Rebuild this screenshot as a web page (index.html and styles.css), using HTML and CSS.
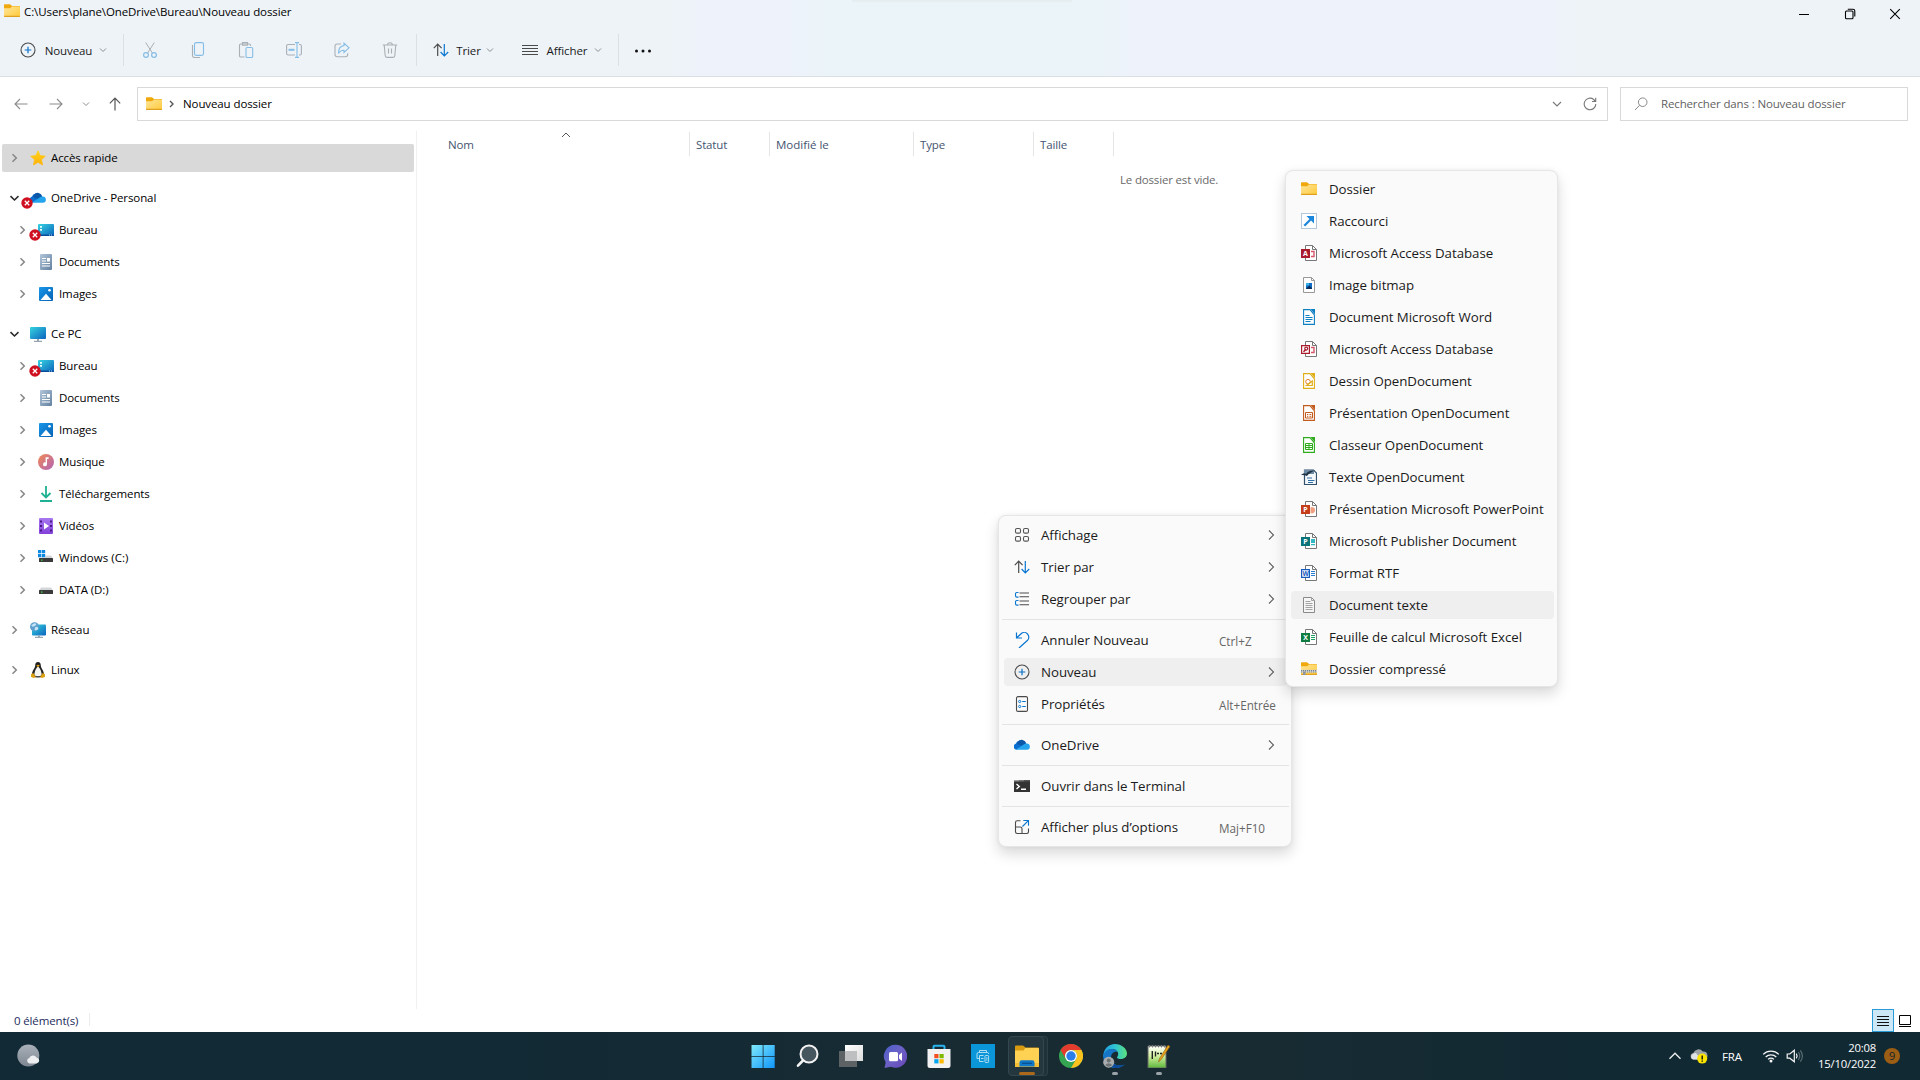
FILE: index.html
```html
<!DOCTYPE html>
<html lang="fr">
<head>
<meta charset="utf-8">
<title>Nouveau dossier</title>
<link rel="stylesheet" href="styles.css">
</head>
<body>
<svg class="defs" aria-hidden="true">
  <defs>
    <linearGradient id="gFolder" x1="0" y1="0" x2="1" y2="1"><stop offset="0" stop-color="#ffe59a"/><stop offset="1" stop-color="#ffca3a"/></linearGradient>
    <linearGradient id="gDesk" x1="0" y1="0" x2="1" y2="1"><stop offset="0" stop-color="#35d3e0"/><stop offset="1" stop-color="#0c64bd"/></linearGradient>
    <linearGradient id="gDoc" x1="0" y1="0" x2="1" y2="1"><stop offset="0" stop-color="#b3c6da"/><stop offset="1" stop-color="#62809f"/></linearGradient>
    <linearGradient id="gImg" x1="0" y1="0" x2="1" y2="1"><stop offset="0" stop-color="#1a98ea"/><stop offset="1" stop-color="#0561b4"/></linearGradient>
    <linearGradient id="gMus" x1="0" y1="0" x2="1" y2="1"><stop offset="0" stop-color="#f08a54"/><stop offset="1" stop-color="#b163b8"/></linearGradient>
    <linearGradient id="gVid" x1="0" y1="0" x2="0" y2="1"><stop offset="0" stop-color="#a878f0"/><stop offset="1" stop-color="#8240d8"/></linearGradient>
    <linearGradient id="gStar" x1="0" y1="0" x2="0" y2="1"><stop offset="0" stop-color="#ffd21c"/><stop offset="1" stop-color="#fdb20a"/></linearGradient>
    <linearGradient id="gWin" x1="0" y1="0" x2="1" y2="1"><stop offset="0" stop-color="#7feafc"/><stop offset="1" stop-color="#0f94fa"/></linearGradient>
    <linearGradient id="gChat" x1="0" y1="0" x2="1" y2="1"><stop offset="0" stop-color="#4a5fc8"/><stop offset=".45" stop-color="#6a62c6"/><stop offset="1" stop-color="#6a46b8"/></linearGradient>
    <linearGradient id="gEdge" x1="0" y1="0" x2="1" y2="0"><stop offset="0" stop-color="#1f9de0"/><stop offset=".5" stop-color="#2fc4d4"/><stop offset="1" stop-color="#5ce07c"/></linearGradient>
    <linearGradient id="gNote" x1="0" y1="0" x2="0" y2="1"><stop offset="0" stop-color="#fff"/><stop offset=".45" stop-color="#d4f0a0"/><stop offset="1" stop-color="#5cb83a"/></linearGradient>
    <linearGradient id="gMoon" x1="0" y1="0" x2="0" y2="1"><stop offset="0" stop-color="#a9b0ba"/><stop offset="1" stop-color="#7e8791"/></linearGradient>
    <linearGradient id="gTv1" x1="0" y1="0" x2="1" y2="1"><stop offset="0" stop-color="#fff"/><stop offset="1" stop-color="#dcdcdc"/></linearGradient>
  </defs>
  <symbol id="folder" viewBox="0 0 16 16"><path d="M0 2.2c0-.7.5-1 1-1h4.6c.5 0 .8.2 1.1.5L8 3H15c.6 0 1 .3 1 1v3H0z" fill="#f0a90c"/><path d="M0 5.2h6.2L8 3.600h7.300q.7 0 .7.700V13.300q0 .8-.8.8H.8q-.8 0-.8-.8z" fill="url(#gFolder)"/><path d="M0 12.800h16v.5q0 .8-.8.8H.8q-.8 0-.8-.8z" fill="#e0a01e"/></symbol>
  <symbol id="chev-d" viewBox="0 0 8 8"><path d="M1 2.500l3 3 3-3" fill="none" stroke="currentColor" stroke-width="1"/></symbol>
  <symbol id="chev-r" viewBox="0 0 10 10"><path d="M3 .5l4.500 4.500L3 9.500" fill="none" stroke="currentColor" stroke-width="1.100"/></symbol>
  <symbol id="tw-r" viewBox="0 0 10 10"><path d="M3.500 1.200L7.300 5 3.500 8.800" fill="none" stroke="#868686" stroke-width="1.500"/></symbol>
  <symbol id="tw-d" viewBox="0 0 10 10"><path d="M1.500 3.200L5.500 7l4-3.800" fill="none" stroke="#2b2b2b" stroke-width="1.600"/></symbol>
  <symbol id="plus" viewBox="0 0 16 16"><circle cx="8" cy="8" r="7" fill="none" stroke="#4a4a4a" stroke-width="1.100"/><path d="M8 4.700v6.600M4.700 8h6.600" stroke="#0a70c8" stroke-width="1.200"/></symbol>
  <symbol id="sort" viewBox="0 0 16 16"><g fill="none" stroke-width="1.200"><path d="M4.700 14V2.200M.8 6.200l3.900-4 3.900 4" stroke="#4c4c4c"/><path d="M11.300 2v11.900M7.600 10l3.700 3.900L15.200 10" stroke="#0a76d0"/></g></symbol>
  <symbol id="star" viewBox="0 0 16 16"><path d="M8 .8l2.100 4.800 5.200.6-3.900 3.500 1.100 5.200L8 12.300l-4.500 2.600 1.100-5.200L.7 6.200l5.200-.6z" fill="url(#gStar)" stroke="url(#gStar)" stroke-width=".8" stroke-linejoin="round"/></symbol>
  <symbol id="cloud" viewBox="0 0 16 16"><path d="M2.400 12.700A3.200 3.200 0 0 1 2 6.500a4.600 4.600 0 0 1 3.600-3.100l6 4.600z" fill="#0a6fd0"/><path d="M4 4.700a4.700 4.700 0 0 1 8.300 1.700L9 9.500 3 7z" fill="#0b57a8"/><path d="M2 12.500L9.700 7.600a4 4 0 0 1 2.800-1.100 3.100 3.100 0 0 1 .4 6.300H3.300z" fill="#25a4ee"/></symbol>
  <symbol id="err" viewBox="0 0 12 12"><circle cx="6" cy="6" r="5.700" fill="#cf1020"/><path d="M3.800 3.800l4.400 4.400M8.200 3.800L3.800 8.200" stroke="#fff" stroke-width="1.300"/></symbol>
  <symbol id="desk" viewBox="0 0 16 16"><rect y="2" width="16" height="12" rx="1" fill="url(#gDesk)"/><path d="M2 4h2v1.800H2zM2 7h2v1.800H2z" fill="#e8fbff"/><path d="M0 12.500h16V13q0 1-1 1H1q-1 0-1-1z" fill="#0a4d9b"/><path d="M11 13h1M13 13h1" stroke="#9ce0ff"/></symbol>
  <symbol id="docs" viewBox="0 0 16 16"><rect x="2" width="12" height="16" rx="1" fill="url(#gDoc)"/><path d="M4 4.500h4M4 7h4M4 9.500h8M4 12h8" stroke="#fff" stroke-width="1.100"/><path d="M9 4h3v3.500H9z" fill="#fff"/></symbol>
  <symbol id="imgs" viewBox="0 0 16 16"><rect x="1" y="1" width="14" height="14" rx="1" fill="url(#gImg)"/><path d="M2.500 14L8 7.800 13.500 14z" fill="#fff"/><circle cx="11.500" cy="4.200" r="1.300" fill="#fff"/></symbol>
  <symbol id="pc" viewBox="0 0 16 16"><rect y="1" width="16" height="12" rx="1" fill="url(#gDesk)"/><path d="M7 13h2v1.700h3V16H4v-1.300h3z" fill="#9aa6b0"/></symbol>
  <symbol id="music" viewBox="0 0 16 16"><circle cx="8" cy="8" r="8" fill="url(#gMus)"/><path d="M7.600 3.200h3v1.900H9v5.200a2 2 0 1 1-1.400-1.900z" fill="#fff"/></symbol>
  <symbol id="dl" viewBox="0 0 16 16"><path d="M8 0v11M3.500 7L8 11.500 12.500 7M2 15h12" fill="none" stroke="#1eb193" stroke-width="1.800"/></symbol>
  <symbol id="video" viewBox="0 0 16 16"><rect x="1" width="14" height="16" rx="1" fill="url(#gVid)"/><path d="M6 4.500l5 3.500-5 3.500z" fill="#fff"/><path d="M2 2.500h2v2H2zM2 7h2v2H2zM2 11.500h2v2H2zM12 2.500h2v2h-2zM12 7h2v2h-2zM12 11.500h2v2h-2z" fill="#4a1a8c"/></symbol>
  <symbol id="drive" viewBox="0 0 16 16"><path d="M3 5.500h10l2 3H1z" fill="#d4d7d9"/><rect x="1" y="8" width="14" height="4" rx=".6" fill="#3a3a3a"/><rect x="3" y="9.500" width="1.500" height="1.200" fill="#3be03b"/></symbol>
  <symbol id="cdrive" viewBox="0 0 16 16"><path d="M5 5.500h8l2 3H2z" fill="#d4d7d9"/><rect x="1" y="8" width="14" height="4" rx=".6" fill="#3a3a3a"/><rect x="3" y="9.500" width="1.500" height="1.200" fill="#3be03b"/><path d="M0 0h7.500v7.500H0z" fill="#fff"/><path d="M0 0h3.300v3.300H0zM3.900 0h3.300v3.300H3.900zM0 3.900h3.300v3.300H0zM3.900 3.900h3.300v3.300H3.900z" fill="#1089e0"/></symbol>
  <symbol id="net" viewBox="0 0 16 16"><rect x="2" y="2.500" width="14" height="11" rx="1" fill="url(#gDesk)"/><path d="M8 13.500h2v1.200h3v1.200H5v-1.200h3z" fill="#9aa6b0"/><circle cx="4.500" cy="4.700" r="4.500" fill="#5c9fce"/><path d="M1.200 3.500q3-3 4.500-2t-1 2.500-3.500-.5zM5 5.500q2-1.500 3 .2t-1.500 2.500T5 5.500z" fill="#c5e3f5"/></symbol>
  <symbol id="tux" viewBox="0 0 16 16"><path d="M8 0c2 0 2.800 1.400 2.800 3.500 0 2.500 3.200 5 3.200 9 0 2-2 3-6 3s-6-1-6-3c0-4 3.200-6.500 3.200-9C5.200 1.400 6 0 8 0z" fill="#222"/><path d="M8 4.500c1.500 1 3.800 5 3.600 8.500-1 1.800-6.200 1.800-7.200 0C4.200 9.500 6.500 5.500 8 4.500z" fill="#f4f4f0"/><path d="M6.200 3.500L8 2.700l1.800.8L8 5z" fill="#e8a50c"/><path d="M1 12.200l2.300-1.200 2.600 4-1.900 1-2.900-1zM15 12.200L12.700 11l-2.600 4 1.900 1 2.900-1z" fill="#dba010"/></symbol>
  <symbol id="more-arrow" viewBox="0 0 16 16"><g fill="none" stroke-width="1.100"><path d="M6.500 1.700H3.200Q1.500 1.700 1.500 3.400v9.400q0 1.700 1.700 1.700h9.600q1.700 0 1.700-1.700V9.500M1.500 8h4.800q1.700 0 1.700 1.700v4.800" stroke="#4a4a4a"/><path d="M8.500 7.500L14.300 1.700M9.300 1.500h5.200v5.200" stroke="#0a76d0"/></g></symbol>
  <symbol id="page" viewBox="0 0 16 16"><path d="M4.500.5h7l4 4v11h-11z" fill="#fff" stroke="#777"/><path d="M11.500.5v4h4" fill="none" stroke="#777"/></symbol>
  <symbol id="odf" viewBox="0 0 16 16"><path d="M2.600.6h6.400L13.400 6v9.400H2.600z" fill="#fff" stroke="currentColor" stroke-width="1.100"/><path d="M9.500 0H14v5.500z" fill="currentColor"/></symbol>
</svg>

<div class="window">
  <header class="head">
    <div class="title">
      <svg class="i16"><use href="#folder"/></svg>
      <span class="title-text">C:\Users\plane\OneDrive\Bureau\Nouveau dossier</span>
      <div class="winbtns">
        <svg viewBox="0 0 12 12"><path d="M1 6.500h10" stroke="#000" stroke-width="1"/></svg>
        <svg viewBox="0 0 12 12"><g fill="none" stroke="#000" stroke-width="1.100"><rect x="1.500" y="3" width="7.500" height="7.800" rx="1"/><path d="M3.800 1.300h5.200q1.800 0 1.800 1.800v5.400"/></g></svg>
        <svg viewBox="0 0 12 12"><path d="M1.200 1.200l9.600 9.600M10.800 1.200l-9.600 9.600" stroke="#000" stroke-width="1.100"/></svg>
      </div>
    </div>
    <div class="toolbar">
      <button class="tb tb-new"><svg class="i16"><use href="#plus"/></svg><span>Nouveau</span><svg class="i8"><use href="#chev-d"/></svg></button>
      <i class="vsep"></i>
      <div class="tools">
        <svg class="i16" viewBox="0 0 16 16"><g fill="none"><path d="M3.700.5l6.800 10.700M12.300.5L5.500 11.200" stroke="#a9b0b5"/><circle cx="4" cy="13" r="2.400" stroke="#86bde6" stroke-width="1.200"/><circle cx="12" cy="13" r="2.400" stroke="#86bde6" stroke-width="1.200"/></g></svg>
        <svg class="i16" viewBox="0 0 16 16"><g fill="none" stroke-width="1.100"><path d="M2.500 3v10.500q0 2 2 2h5.500" stroke="#a9b0b5"/><rect x="4.500" y=".6" width="9" height="12.800" rx="1.600" stroke="#86bde6"/></g></svg>
        <svg class="i16" viewBox="0 0 16 16"><g fill="none" stroke-width="1.100"><path d="M6.500 15H2.800q-1.300 0-1.300-1.300V3.300q0-1.300 1.300-1.300h8.400q1.300 0 1.300 1.300v.7" stroke="#a9b0b5"/><path d="M4.500.6h5v2.600h-5z" stroke="#a9b0b5"/><rect x="8" y="5.500" width="6.700" height="10" rx="1.200" stroke="#86bde6"/></g></svg>
        <svg class="i16" viewBox="0 0 16 16"><g fill="none" stroke-width="1.100"><path d="M9 2.500H2.200Q.6 2.500.6 4.100v7.300q0 1.600 1.600 1.600H9M13 2.500h.8q1.600 0 1.600 1.600v7.300q0 1.600-1.600 1.600H13" stroke="#a9b0b5"/><path d="M11 .6v14.800M9 .6h4M9 15.400h4" stroke="#86bde6"/><path d="M2.500 7.800h6" stroke="#86bde6" stroke-width="2"/></g></svg>
        <svg class="i16" viewBox="0 0 16 16"><g fill="none" stroke-width="1.100"><path d="M7 2H3.200Q1 2 1 4.200v8.300q0 2.200 2.200 2.200h8.300q2.200 0 2.200-2.200v-1.200" stroke="#a9b0b5"/><path d="M10 1.200l5 4.600-5 4.600V8.200Q6 8.200 4.500 11.500 4.500 4 10 3.600z" stroke="#86bde6"/></g></svg>
        <svg class="i16" viewBox="0 0 16 16"><g fill="none" stroke="#a9b0b5" stroke-width="1.100"><path d="M.8 3h14.400M2.200 3l1 10.800q.2 1.600 1.600 1.600h6.400q1.400 0 1.600-1.600L13.800 3M5.600 3Q5.600.7 8 .7T10.400 3M6.500 6.500v5M9.500 6.500v5"/></g></svg>
      </div>
      <i class="vsep"></i>
      <button class="tb tb-sort"><svg class="i16"><use href="#sort"/></svg><span>Trier</span><svg class="i8"><use href="#chev-d"/></svg></button>
      <button class="tb tb-view"><svg class="i16" viewBox="0 0 16 16"><path d="M0 3.500h16M0 6.500h16M0 9.500h16M0 12.500h16" stroke="#4a4a4a"/></svg><span>Afficher</span><svg class="i8"><use href="#chev-d"/></svg></button>
      <i class="vsep"></i>
      <svg class="dots" viewBox="0 0 18 4"><g fill="#111"><circle cx="2.500" cy="2" r="1.500"/><circle cx="9" cy="2" r="1.500"/><circle cx="15.500" cy="2" r="1.500"/></g></svg>
    </div>
  </header>

  <nav class="navbar">
    <div class="arrows">
      <svg class="i14" viewBox="0 0 14 14"><path d="M13.500 7H1M6 2L1 7l5 5" fill="none" stroke="#8c8c8c" stroke-width="1.100"/></svg>
      <svg class="i14" viewBox="0 0 14 14"><path d="M.5 7H13M8 2l5 5-5 5" fill="none" stroke="#8c8c8c" stroke-width="1.100"/></svg>
      <svg class="i8"><use href="#chev-d"/></svg>
      <svg class="i14 up" viewBox="0 0 14 14"><path d="M7 13.500V1.200M1.800 6.400L7 1.200l5.200 5.200" fill="none" stroke="#555" stroke-width="1.200"/></svg>
    </div>
    <div class="address">
      <svg class="i16"><use href="#folder"/></svg>
      <svg class="crumb" viewBox="0 0 10 10"><path d="M3 2l3 3-3 3" fill="none" stroke="#555" stroke-width="1.400"/></svg>
      <span>Nouveau dossier</span>
      <svg class="drop" viewBox="0 0 10 10"><path d="M1 3l4 4 4-4" fill="none" stroke="#777" stroke-width="1.100"/></svg>
      <svg class="refresh" viewBox="0 0 14 14"><path d="M12.800 7A5.800 5.800 0 1 1 10.700 2.500L12.500 4.300M12.700 .8v3.700H9" fill="none" stroke="#777" stroke-width="1.100"/></svg>
    </div>
    <div class="search">
      <svg viewBox="0 0 14 14"><g fill="none" stroke="#8a8a8a" stroke-width="1"><circle cx="8.700" cy="5.200" r="4.300"/><path d="M5.600 8.300L1 13"/></g></svg>
      <span>Rechercher dans : Nouveau dossier</span>
    </div>
  </nav>

  <main class="body">
    <aside class="tree">
      <div class="row sel"><svg class="tw"><use href="#tw-r"/></svg><svg class="i16"><use href="#star"/></svg><span>Accès rapide</span></div>
      <div class="row gap"><svg class="tw"><use href="#tw-d"/></svg><svg class="i16"><use href="#cloud"/></svg><svg class="err"><use href="#err"/></svg><span>OneDrive - Personal</span></div>
      <div class="row sub"><svg class="tw"><use href="#tw-r"/></svg><svg class="i16"><use href="#desk"/></svg><svg class="err"><use href="#err"/></svg><span>Bureau</span></div>
      <div class="row sub"><svg class="tw"><use href="#tw-r"/></svg><svg class="i16"><use href="#docs"/></svg><span>Documents</span></div>
      <div class="row sub"><svg class="tw"><use href="#tw-r"/></svg><svg class="i16"><use href="#imgs"/></svg><span>Images</span></div>
      <div class="row gap"><svg class="tw"><use href="#tw-d"/></svg><svg class="i16"><use href="#pc"/></svg><span>Ce PC</span></div>
      <div class="row sub"><svg class="tw"><use href="#tw-r"/></svg><svg class="i16"><use href="#desk"/></svg><svg class="err"><use href="#err"/></svg><span>Bureau</span></div>
      <div class="row sub"><svg class="tw"><use href="#tw-r"/></svg><svg class="i16"><use href="#docs"/></svg><span>Documents</span></div>
      <div class="row sub"><svg class="tw"><use href="#tw-r"/></svg><svg class="i16"><use href="#imgs"/></svg><span>Images</span></div>
      <div class="row sub"><svg class="tw"><use href="#tw-r"/></svg><svg class="i16"><use href="#music"/></svg><span>Musique</span></div>
      <div class="row sub"><svg class="tw"><use href="#tw-r"/></svg><svg class="i16"><use href="#dl"/></svg><span>Téléchargements</span></div>
      <div class="row sub"><svg class="tw"><use href="#tw-r"/></svg><svg class="i16"><use href="#video"/></svg><span>Vidéos</span></div>
      <div class="row sub"><svg class="tw"><use href="#tw-r"/></svg><svg class="i16"><use href="#cdrive"/></svg><span class="wide">Windows (C:)</span></div>
      <div class="row sub"><svg class="tw"><use href="#tw-r"/></svg><svg class="i16"><use href="#drive"/></svg><span>DATA (D:)</span></div>
      <div class="row gap"><svg class="tw"><use href="#tw-r"/></svg><svg class="i16"><use href="#net"/></svg><span>Réseau</span></div>
      <div class="row gap"><svg class="tw"><use href="#tw-r"/></svg><svg class="i16"><use href="#tux"/></svg><span>Linux</span></div>
    </aside>
    <section class="files">
      <div class="cols">
        <div class="col c-name">Nom<svg class="asc" viewBox="0 0 10 6"><path d="M1 5l4-4 4 4" fill="none" stroke="#555"/></svg></div>
        <div class="col c-status">Statut</div>
        <div class="col c-date">Modifié le</div>
        <div class="col c-type">Type</div>
        <div class="col c-size">Taille</div>
      </div>
      <p class="empty">Le dossier est vide.</p>
    </section>
  </main>

  <footer class="status">
    <span>0 élément(s)</span>
    <div class="views">
      <div class="view on"><svg viewBox="0 0 12 12"><path d="M0 1.500h12M0 4.500h12M0 7.500h12M0 10.500h12" stroke="#111"/></svg></div>
      <div class="view"><svg viewBox="0 0 12 12"><path d="M.5.500h11v9H.5zM0 11.500h12" fill="none" stroke="#000"/></svg></div>
    </div>
  </footer>
</div>

<div class="menu ctx">
  <div class="mi"><svg class="i16" viewBox="0 0 16 16"><g fill="none" stroke="#555" stroke-width="1.100"><rect x="1.500" y="1.500" width="5" height="4.600" rx="1.400"/><rect x="9.500" y="1.500" width="5" height="4.600" rx="1.400"/><rect x="1.500" y="9.500" width="5" height="4.600" rx="1.400"/><rect x="9.500" y="9.500" width="5" height="4.600" rx="1.400"/></g></svg><span>Affichage</span><svg class="arr"><use href="#chev-r"/></svg></div>
  <div class="mi"><svg class="i16"><use href="#sort"/></svg><span>Trier par</span><svg class="arr"><use href="#chev-r"/></svg></div>
  <div class="mi"><svg class="i16" viewBox="0 0 16 16"><g fill="none" stroke-width="1.100"><path d="M4.500 1.500H2.800Q1.500 1.500 1.500 2.800v2q0 1.300 1.300 1.300h1.700M4.500 9.500H2.800q-1.300 0-1.300 1.300v2q0 1.300 1.300 1.300h1.700" stroke="#0a76d0"/><path d="M5.500 2h9.500M5.500 5.700h9.500M5.500 10h9.500M5.500 13.700h9.500" stroke="#4a4a4a"/></g></svg><span>Regrouper par</span><svg class="arr"><use href="#chev-r"/></svg></div>
  <hr>
  <div class="mi"><svg class="i16" viewBox="0 0 16 16"><path d="M2.500.5v5.500H8M2.500 6L6.800 2A4.600 4.600 0 0 1 13.600 8.200L5 16" fill="none" stroke="#0a76d0" stroke-width="1.200"/></svg><span>Annuler Nouveau</span><kbd>Ctrl+Z</kbd></div>
  <div class="mi hov"><svg class="i16"><use href="#plus"/></svg><span>Nouveau</span><svg class="arr"><use href="#chev-r"/></svg></div>
  <div class="mi"><svg class="i16" viewBox="0 0 16 16"><g fill="none"><rect x="2.500" y=".6" width="11" height="14.800" rx="1.500" stroke="#4a4a4a" stroke-width="1.100"/><circle cx="5.700" cy="5.500" r="1.100" stroke="#0a76d0"/><circle cx="5.700" cy="10.500" r="1.100" stroke="#0a76d0"/><path d="M8.200 5.500h3.600M8.200 10.500h3.600" stroke="#0a76d0" stroke-width="1.200"/></g></svg><span>Propriétés</span><kbd>Alt+Entrée</kbd></div>
  <hr>
  <div class="mi"><svg class="i16"><use href="#cloud"/></svg><span>OneDrive</span><svg class="arr"><use href="#chev-r"/></svg></div>
  <hr>
  <div class="mi"><svg class="i16" viewBox="0 0 16 16"><path d="M0 2h16v12H0z" fill="#333"/><path d="M0 2h5.500v1.500H0z" fill="#999"/><path d="M5.500 2h5v1.500h-5z" fill="#777"/><path d="M10.500 2H16v1.500h-5.500z" fill="#555"/><path d="M2.500 6l2.800 2.500L2.500 11M7 11.300h5" fill="none" stroke="#fff" stroke-width="1.400"/></svg><span>Ouvrir dans le Terminal</span></div>
  <hr>
  <div class="mi"><svg class="i16"><use href="#more-arrow"/></svg><span>Afficher plus d’options</span><kbd>Maj+F10</kbd></div>
</div>

<div class="menu sub-menu">
  <div class="mi"><svg class="i16"><use href="#folder"/></svg><span>Dossier</span></div>
  <div class="mi"><svg class="i16" viewBox="0 0 16 16"><rect x=".5" y=".5" width="15" height="15" fill="#fff" stroke="#b4c8dc"/><path d="M3.300 12.700L11 5" stroke="#1a86dc" stroke-width="2.200"/><path d="M5.500 3H13v7.500L10.800 8.300 7.700 5.200z" fill="#1a86dc"/></svg><span>Raccourci</span></div>
  <div class="mi"><svg class="i16" viewBox="0 0 16 16"><use href="#page"/><path d="M10 6.500h3v5h-3" fill="none" stroke="#d8566c" stroke-width="1.400"/><path d="M0 4h9v9H0z" fill="#a91c2e"/><text x="4.500" y="11.300" class="ltr">A</text></svg><span>Microsoft Access Database</span></div>
  <div class="mi"><svg class="i16" viewBox="0 0 16 16"><path d="M2.500.500h8l3 3v12h-11z" fill="#fff" stroke="#999"/><path d="M10.500.500v3h3" fill="none" stroke="#999"/><path d="M5 6h6v6H5z" fill="#0e6ec4"/><path d="M5 12l3-3.500 3 2.500v1z" fill="#0a2d5c"/><path d="M5 6h3v2.500H5z" fill="#38b0e8"/></svg><span>Image bitmap</span></div>
  <div class="mi c-blue"><svg class="i16" viewBox="0 0 16 16"><use href="#odf"/><path d="M4.500 6.500h4M4.500 8.500h7M4.500 10.500h7M4.500 12.500h5" stroke="currentColor"/></svg><span>Document Microsoft Word</span></div>
  <div class="mi"><svg class="i16" viewBox="0 0 16 16"><use href="#page"/><path d="M10 6.500h3v5h-3" fill="none" stroke="#d8566c" stroke-width="1.400"/><path d="M.6 4.600h7.800v7.800H.6z" fill="#fff" stroke="#a91c2e" stroke-width="1.200"/><path d="M2.500 10.800L5 8.300" stroke="#a91c2e" stroke-width="1.600"/><circle cx="5.200" cy="7.600" r="1.500" fill="none" stroke="#a91c2e" stroke-width="1.100"/></svg><span>Microsoft Access Database</span></div>
  <div class="mi c-gold"><svg class="i16" viewBox="0 0 16 16"><use href="#odf"/><circle cx="7" cy="8.700" r="2.300" fill="none" stroke="#e08030"/><path d="M5.500 12.500L11.300 8v4.500z" fill="none" stroke="currentColor" stroke-width="1.200"/></svg><span>Dessin OpenDocument</span></div>
  <div class="mi c-orange"><svg class="i16" viewBox="0 0 16 16"><use href="#odf"/><path d="M4.500 7.500h7v5.500h-7zM6 9.500h1.300M8.500 9.500h1.800M6 11.300h1.300M8.500 11.300h1.800" fill="none" stroke="currentColor"/></svg><span>Présentation OpenDocument</span></div>
  <div class="mi c-green"><svg class="i16" viewBox="0 0 16 16"><use href="#odf"/><path d="M4.500 6.500h7v6h-7zM4.500 8.500h7M4.500 10.500h7M8 6.500v6" fill="none" stroke="currentColor" stroke-width="1"/></svg><span>Classeur OpenDocument</span></div>
  <div class="mi"><svg class="i16" viewBox="0 0 16 16"><path d="M3.500 1h9l3 3v11.500h-12z" fill="#f4f8fb" stroke="#34516c" stroke-width="1.200"/><path d="M3 1h10v4H3z" fill="#6d8ba5"/><path d="M0 6q3-3 5-1 2-4 9-3.500Q8 4 6 7 3 5.500 0 6z" fill="#1f3447"/><path d="M6 9h5M7 11.500h6.500M7 13.500h5" stroke="#2f6fa8" stroke-width="1.100"/></svg><span>Texte OpenDocument</span></div>
  <div class="mi"><svg class="i16" viewBox="0 0 16 16"><use href="#page"/><path d="M9.500 6.500a3 3 0 0 1 4.500 3 3 3 0 0 1-4.500 2.600z" fill="#f0a080"/><path d="M0 4h9v9H0z" fill="#c43e1c"/><text x="4.500" y="11.300" class="ltr">P</text></svg><span>Présentation Microsoft PowerPoint</span></div>
  <div class="mi"><svg class="i16" viewBox="0 0 16 16"><use href="#page"/><path d="M10 6h4v4h-4zM10 11h4v1.200h-4z" fill="#36b8c4"/><path d="M0 4h9v9H0z" fill="#0a7478"/><text x="4.500" y="11.300" class="ltr">P</text></svg><span>Microsoft Publisher Document</span></div>
  <div class="mi"><svg class="i16" viewBox="0 0 16 16"><use href="#page"/><path d="M10 6.500h4M10 8.500h4M10 10.500h4" stroke="#2b7cd3"/><path d="M.6 4.600h7.800v7.800H.6z" fill="#fff" stroke="#185abd" stroke-width="1.200"/><text x="4.500" y="11.200" class="ltr w">W</text></svg><span>Format RTF</span></div>
  <div class="mi hov"><svg class="i16" viewBox="0 0 16 16"><path d="M2.500.500h8l3 3v12h-11z" fill="#f6f6f6" stroke="#8a8a8a"/><path d="M10.500.500v3h3M4.500 4.500h5M4.500 6.500h7M4.500 8.500h7M4.500 10.500h7M4.500 12.500h7" fill="none" stroke="#a4a4a4"/></svg><span>Document texte</span></div>
  <div class="mi"><svg class="i16" viewBox="0 0 16 16"><use href="#page"/><path d="M10 6.500h4M10 8.500h4M10 10.500h4" stroke="#21a366" stroke-width="1.200"/><path d="M0 4h9v9H0z" fill="#107c41"/><text x="4.500" y="11.300" class="ltr">X</text></svg><span>Feuille de calcul Microsoft Excel</span></div>
  <div class="mi"><svg class="i16" viewBox="0 0 16 16"><use href="#folder"/><path d="M0 8.800h16v2.700H0z" fill="#c9cdd0"/><path d="M0 9.500h16M0 11h16" stroke="#7d858c" stroke-dasharray="1 1"/><path d="M2 10.500h2.500V14H2z" fill="#8f979e"/></svg><span>Dossier compressé</span></div>
</div>

<div class="taskbar">
  <div class="weather"><svg viewBox="0 0 24 24"><circle cx="11.300" cy="11.500" r="11" fill="url(#gMoon)"/><path d="M12.500 19.500a2.800 2.800 0 0 1-.2-5.500 4 4 0 0 1 7.200-.6 3.100 3.100 0 0 1 .3 6.100z" fill="#eceef0"/></svg></div>
  <div class="apps">
    <div class="app"><svg viewBox="0 0 24 24"><path d="M.5 1h11.200v11.200H.5zM12.500 1h11.200v11.200H12.500zM.5 13h11.200v11.200H.5zM12.500 13h11.200v11.200H12.500z" fill="url(#gWin)"/></svg></div>
    <div class="app"><svg viewBox="0 0 24 24"><circle cx="14" cy="10" r="8.500" fill="#46565e" stroke="#f2f2f2" stroke-width="2"/><path d="M8 16.500L3 21.700" stroke="#f2f2f2" stroke-width="2.600" stroke-linecap="round"/></svg></div>
    <div class="app"><svg viewBox="0 0 24 24"><path d="M6 1h18v16H6z" fill="url(#gTv1)"/><path d="M0 7h18v16H0z" fill="#5d6265"/><path d="M6 7h12v10H6z" fill="#bdbfc0"/></svg></div>
    <div class="app"><svg viewBox="0 0 24 24"><path d="M12.500.800A11.500 11.500 0 1 1 8 22.800L1.500 24l1.200-5.500A11.500 11.500 0 0 1 12.500.800z" fill="url(#gChat)"/><rect x="6" y="8" width="9" height="9.300" rx="1.500" fill="#fff"/><path d="M16 11l3-2.600v8.600L16 14.500z" fill="#fff"/></svg></div>
    <div class="app"><svg viewBox="0 0 24 24"><path d="M6.500 5V2.800q0-1 1-1h9q1 0 1 1V5" fill="none" stroke="#2ab4ee" stroke-width="2"/><path d="M.5 5h23v16.500q0 2.500-2.500 2.500H3Q.5 24 .5 21.500z" fill="#f2f2f2"/><path d="M7.300 10h4.200v4.200H7.300z" fill="#f25022"/><path d="M12.500 10h4.200v4.200h-4.200z" fill="#7fba00"/><path d="M7.300 15.200h4.200v4.200H7.300z" fill="#00a4ef"/><path d="M12.500 15.200h4.200v4.200h-4.200z" fill="#ffb900"/></svg></div>
    <div class="app"><svg viewBox="0 0 24 24"><path d="M0 0h24v24H0z" fill="#0a96d8"/><g fill="none" stroke="#bfe4f5" stroke-width=".9"><path d="M8.500 8.500V6.500h7v2M6 14.500V10q0-1.500 1.500-1.500h9q1 0 1.300 1.500M6 14.500h2.500M8.500 11.500h4M8.500 11.500v6h4M10 14.500h2.500"/><rect x="14" y="11.500" width="3.600" height="7" rx=".8"/><path d="M15 14h1.600M15 16h1.600"/></g></svg></div>
    <div class="app active"><svg viewBox="0 0 24 24"><path d="M0 2.500q0-1 1-1h6.500q.8 0 1.300.500L10.500 3.500H23q1 0 1 1V8H0z" fill="#d79a10"/><path d="M0 6.500h8.500l1.700-2.500H23q1 0 1 1v18H0z" fill="#ffd254"/><path d="M0 19h24v4H0z" fill="#f6bf35"/><path d="M4.500 22.500v-4q0-2.200 2.200-2.200h10.600q2.200 0 2.200 2.200v4z" fill="#0f78c8"/><path d="M7 19.300h10" stroke="#0a4d8a" stroke-width="1.200"/></svg><b class="ind"></b></div>
    <div class="app"><svg viewBox="0 0 24 24"><circle cx="12" cy="12" r="12" fill="#35a552"/><path d="M1.600 6A12 12 0 0 1 22.400 6H12a6 6 0 0 0-5.200 9z" fill="#e33b2e"/><path d="M22.400 6A12 12 0 0 1 12 24l5.200-9A6 6 0 0 0 12 6z" fill="#fcc31e"/><circle cx="12" cy="12" r="6" fill="#fff"/><circle cx="12" cy="12" r="4.700" fill="#2b7de9"/></svg></div>
    <div class="app"><svg viewBox="0 0 24 24"><path d="M.2 13.500C0 5 5.500 0 12 0s12 4.500 12 9.500c0 4-3.500 5.500-6.500 5.500-2 0-3.500-.7-3.500-1.500s1.200-1.300 1.200-3.500C15.200 7.200 12.300 5 9 5S2.500 7 .2 13.500z" fill="url(#gEdge)"/><path d="M.2 12C1.500 7 5 4.800 9 5c2.500 0 4.500 1.200 5.500 3-4-1-6.500 2-6.500 5.500 0 4.500 4 8 9 8 2 0 3.500-.5 5-1.500A12 12 0 0 1 12 24C5.500 24 0 19 .2 12z" fill="#1576c8"/><path d="M8 14c0 4.500 4 7.500 9 7.500 2 0 3.500-.5 5-1.500A12 12 0 0 1 12 24c-5-1-7-6-4-10z" fill="#0c4a98"/><circle cx="5.700" cy="18.200" r="5.500" fill="#a9adb0"/><circle cx="5.700" cy="16.500" r="2" fill="#6c7174"/><path d="M2.200 21q3.500-3.600 7 0-3.500 3.500-7 0z" fill="#6c7174"/></svg><b class="ind"></b></div>
    <div class="app"><svg viewBox="0 0 24 24"><path d="M1 2h18v22H1z" fill="url(#gNote)" stroke="#666"/><path d="M2.500 1v2.500M5.500 1v2.500M8.500 1v2.500M11.500 1v2.500M14.500 1v2.500M17.500 1v2.500" stroke="#777"/><path d="M5.300 7v8M8.500 7.500v5M10 9.500h2M13 9.500h2" stroke="#222" stroke-width="1.400"/><path d="M11.500 18l1-3.500L21 1l2 1.500-8.800 13z" fill="#e8a21c" stroke="#7a5010" stroke-width=".5"/></svg><b class="ind"></b></div>
  </div>
  <div class="tray">
    <svg class="t-up" viewBox="0 0 14 14"><path d="M1.500 9.700L7 4.200l5.500 5.500" fill="none" stroke="#f0f0f0" stroke-width="1.300"/></svg>
    <svg class="t-cloud" viewBox="0 0 18 16"><path d="M3.500 11.500A3.300 3.300 0 0 1 3.300 5a5.500 5.500 0 0 1 9.500-1.500A4 4 0 0 1 14 11.500z" fill="#9ea3a8"/><path d="M1 8.500q1-3.500 5-3.500l5 6.500H3.500Q1.300 11.500 1 8.500z" fill="#dfe2e4"/><circle cx="12.200" cy="10.600" r="5" fill="#fce300"/><path d="M12.200 7.500v4M12.200 12.400v1.300" stroke="#111" stroke-width="1.400"/></svg>
    <span class="lang">FRA</span>
    <svg class="t-wifi" viewBox="0 0 18 14"><g fill="none" stroke="#f4f4f4" stroke-width="1.300"><path d="M1.200 5.400a11 11 0 0 1 15.600 0M3.700 8a7.500 7.500 0 0 1 10.600 0M6.100 10.400a4.200 4.200 0 0 1 5.800 0"/></g><circle cx="9" cy="12" r="1.500" fill="#f4f4f4"/></svg>
    <svg class="t-vol" viewBox="0 0 18 14"><path d="M1.200 5h2.600L8.300 1.200v11.600L3.800 9.200H1.200z" fill="none" stroke="#f4f4f4" stroke-width="1.200"/><path d="M10.300 4.700q1.600 2.300 0 4.600" fill="none" stroke="#f4f4f4" stroke-width="1.200"/><path d="M12.300 3q3 4 0 8M14.300 1.300q4.200 5.700 0 11.400" fill="none" stroke="#5f7078" stroke-width="1.100"/></svg>
    <div class="clock"><span>20:08</span><span>15/10/2022</span></div>
    <span class="badge">9</span>
  </div>
</div>
</body>
</html>
```
FILE: styles.css
```css
* { box-sizing: border-box; }
html, body { margin: 0; height: 100%; }
body {
  width: 1920px; height: 1080px; overflow: hidden; position: relative;
  display: flex; flex-direction: column;
  font: 11.5px/16px "Open Sans", "Noto Sans", sans-serif;
  letter-spacing: -0.1px; color: #000; background: #fff;
}
.defs { position: absolute; width: 0; height: 0; }
svg { display: block; flex: none; }
.i16 { width: 16px; height: 16px; }
.i14 { width: 14px; height: 14px; }
.i8 { width: 8px; height: 8px; color: #8a8e92; }

.window { flex: 1; display: flex; flex-direction: column; }

/* title bar and command bar */
.head {
  height: 77px; border-bottom: 1px solid #dadfe3;
  background:
    linear-gradient(#e3ebef, #ebf4f8) 852px 0 / 220px 3px no-repeat,
    linear-gradient(90deg, #eef3f8 0, #eef3f8 670px, #eef2fb 710px, #eef2fb 780px, #ebf4f8 830px, #ebf4f8 1100px, #eef2fb 1140px, #eef2fb 1540px, #eef3f8 1580px);
}
.title { height: 34px; display: flex; padding-left: 4px; }
.title > .i16 { margin-top: 3px; }
.title-text { margin: 4px 0 0 4px; letter-spacing: -0.09px; }
.winbtns { margin: 8px 19px 0 auto; display: flex; gap: 33.500px; }
.winbtns svg { width: 12px; height: 12px; }
.toolbar { height: 32px; display: flex; align-items: center; }
.tb { display: flex; align-items: center; border: 0; padding: 0; background: none; font: inherit; letter-spacing: inherit; color: #1a1a1a; }
.tb span { margin: 2px 0 0; }
.tb-new { width: 123px; padding-left: 20px; }
.tb-new span { margin-left: 8px; width: 49px; }
.tb-new .i8 { margin-left: 6px; }
.vsep { width: 1px; height: 32px; background: #dbe0e5; }
.tools { width: 292px; padding-left: 18px; display: flex; gap: 32px; }
.tb-sort { width: 105px; padding-left: 16px; }
.tb-sort span { margin-left: 7px; width: 25px; }
.tb-sort .i8 { margin-left: 5px; }
.tb-view { width: 96px; }
.tb-view span { margin-left: 7px; width: 44px; }
.tb-view .i8 { margin-left: 5px; }
.dots { width: 18px; height: 4px; margin: 2px 0 0 15px; }

/* navigation */
.navbar { height: 54px; display: flex; padding: 10px 12px 0 0; }
.arrows { width: 137px; height: 34px; display: flex; align-items: center; padding-left: 14px; }
.arrows .i14 + .i14 { margin-left: 21px; }
.arrows .i8 { margin-left: 19px; }
.arrows .up { margin-left: 18px; }
.address { width: 1471px; height: 34px; border: 1px solid #d9d9d9; display: flex; align-items: center; padding-left: 8px; }
.crumb { width: 10px; height: 10px; margin: 0 6px 0 5px; }
.drop { width: 10px; height: 10px; margin-left: auto; }
.refresh { width: 14px; height: 14px; margin: 0 10px 0 21px; }
.search { width: 288px; height: 34px; margin-left: 12px; border: 1px solid #d9d9d9; display: flex; align-items: center; padding-left: 13px; color: #5f5f5f; letter-spacing: -0.14px; }
.search svg { width: 14px; height: 14px; margin-right: 13px; }

/* folder tree */
.body { flex: 1; display: flex; }
.tree { width: 417px; padding: 13px 2px 0; border-right: 1px solid #f0f0f0; }
.row { height: 28px; margin-bottom: 4px; padding-left: 7px; display: flex; align-items: center; border-radius: 2px; position: relative; width: 412px; }
.row.gap { margin-top: 12px; }
.row.sub { padding-left: 15px; }
.row.sel { background: #d9d9d9; }
.tw { width: 10px; height: 10px; margin-right: 11px; }
.row span { margin-left: 5px; }
.row .wide { letter-spacing: 0.05px; }
.err { position: absolute; left: 18.500px; top: 13px; width: 12px; height: 12px; }
.sub .err { left: 26.500px; }

/* details pane */
.files { flex: 1; }
.cols { display: flex; height: 24px; margin-top: 1px; color: #44546f; }
.col { border-right: 1px solid #e5e5e5; padding: 5px 0 0 6px; letter-spacing: -0.15px; position: relative; }
.c-name { width: 273px; padding-left: 31px; }
.asc { position: absolute; left: 144px; top: 0; width: 10px; height: 6px; }
.c-status { width: 80px; }
.c-date { width: 144px; letter-spacing: 0; }
.c-type { width: 120px; }
.c-size { width: 80px; }
.empty { margin: 16px 0 0 703px; color: #6a6a6a; letter-spacing: -0.17px; }

/* status bar */
.status { height: 23px; display: flex; padding-left: 14px; color: #1c2c5c; }
.status > span { height: 13px; width: 76px; margin-top: 4px; border-right: 1px solid #ececec; white-space: nowrap; line-height: 15px; letter-spacing: -0.14px; }
.views { margin-left: auto; display: flex; padding-right: 4px; }
.view { width: 22px; height: 23px; display: grid; place-items: center; }
.view.on { border: 1px solid #2a9bd6; background: #cce8f6; }
.view svg { width: 12px; height: 12px; }

/* context menus, floating above the window */
.menu { position: absolute; display: flex; flex-direction: column; border: 1px solid #e6e6e6; border-radius: 8px; background: #fafafa; box-shadow: 0 7px 14px rgba(0, 0, 0, .15), 0 0 4px rgba(0, 0, 0, .05); padding: 3px 4px; font-size: 13.3px; line-height: 18px; letter-spacing: -0.05px; color: #1b1b1b; }
.ctx { left: 998px; top: 515px; width: 294px; height: 332px; padding-left: 5px; }
.sub-menu { left: 1285px; top: 170px; width: 273px; height: 517px; padding: 2px 3px 2px 5px; }
.mi { flex: none; height: 28px; margin: 2px 0; padding-left: 10px; display: flex; align-items: center; border-radius: 4px; position: relative; }
.mi.hov { background: #efefef; }
.mi span { margin-left: 11px; }
.sub-menu .mi span { margin-left: 12px; }
.arr { width: 10px; height: 10px; margin: 0 11px 0 auto; color: #5c5c5c; }
.mi kbd { position: absolute; left: 215px; font: 11.7px/16px "Open Sans", "Noto Sans", sans-serif; letter-spacing: 0; color: #666; top: 7px; }
.menu hr { flex: none; border: 0; height: 1px; background: #e4e4e4; margin: 4px -2px; }
.ltr { font: bold 7px "Open Sans", sans-serif; fill: #fff; text-anchor: middle; }
.ltr.w { fill: #185abd; font-size: 6.5px; }
.c-blue svg { color: #0f7fc4; }
.c-gold svg { color: #e0ae18; }
.c-orange svg { color: #c25a1c; }
.c-green svg { color: #2eac1c; }

/* taskbar */
.taskbar { height: 48px; display: flex; align-items: center; color: #fff; background: linear-gradient(90deg, #122a35 0, #122a35 500px, #182b33 1000px, #182b33 1250px, #112933 1600px, #112933 100%); }
.weather { width: 740.500px; padding-left: 17px; }
.weather svg { width: 24px; height: 24px; }
.apps { display: flex; height: 48px; }
.app { width: 44px; display: grid; place-items: center; position: relative; }
.app svg { width: 24px; height: 24px; }
.active::before { content: ""; position: absolute; inset: 4px 5px 4px 3px; border: 1px solid #33474f; border-radius: 4px; background: #24373f; box-shadow: 4px 0 0 -1px #1f323a, 4px 0 0 0 #2c4048; }
.active svg { position: relative; }
.ind { position: absolute; bottom: 5px; left: 19px; width: 6px; height: 3px; border-radius: 2px; background: #9aa3a8; }
.active .ind { left: 14px; width: 16px; background: #ab6a1b; }
.tray { margin-left: auto; display: flex; align-items: center; padding-right: 20px; }
.t-up { width: 14px; height: 14px; margin-right: 8px; }
.t-cloud { width: 18px; height: 16px; }
.lang { width: 22px; margin: 2px 18px 0 14px; }
.t-wifi { width: 18px; height: 14px; margin-right: 6px; }
.t-vol { width: 18px; height: 14px; }
.clock { width: 72px; text-align: right; display: flex; flex-direction: column; font-size: 11.300px; letter-spacing: -0.2px; }
.badge { width: 16px; height: 16px; margin-left: 8px; border-radius: 50%; background: #9c5d14; color: #14242c; text-align: center; font-size: 11px; line-height: 15px; }
```
